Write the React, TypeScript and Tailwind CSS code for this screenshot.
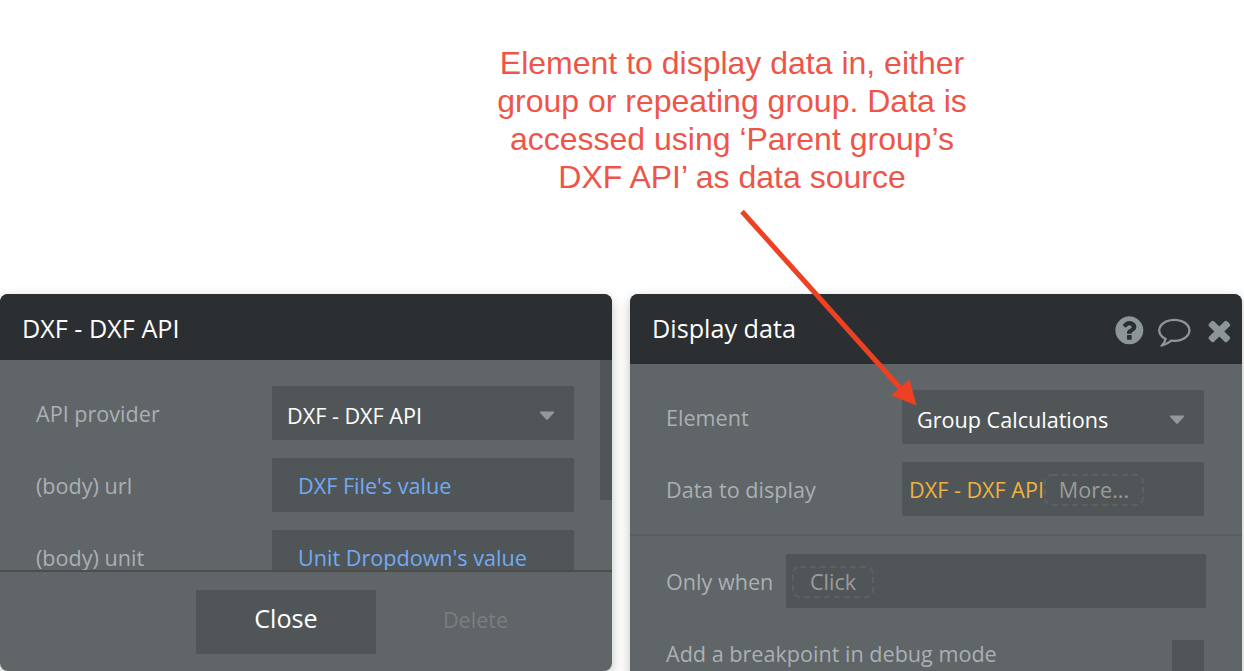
import type { ReactNode } from "react";

const QUESTION =
  "M1024 1376v-192q0-14-9-23t-23-9h-192q-14 0-23 9t-9 23v192q0 14 9 23t23 9h192q14 0 23-9t9-23zm256-672q0-88-55.5-163t-138.5-116-170-41q-243 0-371 213-15 24 8 42l132 100q7 6 19 6 16 0 25-12 53-68 86-92 34-24 86-24 48 0 85.5 26t37.5 59q0 38-20 61t-68 45q-63 28-115.5 86.5t-52.5 125.5v36q0 14 9 23t23 9h192q14 0 23-9t9-23q0-19 21.5-49.5t54.5-49.5q32-18 49-28.5t46-35 44.5-48 28-60.5 12.5-81zm384 192q0 209-103 385.5t-279.5 279.5-385.5 103-385.5-103-279.5-279.5-103-385.5 103-385.5 279.5-279.5 385.5-103 385.5 103 279.5 279.5 103 385.5z";
const COMMENT =
  "M896 384q-204 0-381.5 69.5t-282 187.5-104.5 255q0 112 71.5 213.5t201.5 175.5l87 50-27 96q-24 91-70 172 152-63 275-171l43-38 57 6q69 8 130 8 204 0 381.5-69.5t282-187.5 104.5-255-104.5-255-282-187.5-381.5-69.5zm896 512q0 174-120 321.5t-326 233-450 85.5q-70 0-145-8-198 175-460 242-49 14-114 22h-5q-15 0-27-10.5t-16-27.5v-1q-3-4-.5-12t2-10 4.5-9.5l6-9 7-8.5 8-9q7-8 31-34.5t34.5-38 31-39.5 32.5-51 27-59 26-76q-157-89-247.5-220t-90.5-281q0-174 120-321.5t326-233 450-85.5 450 85.5 326 233 120 321.5z";
const TIMES =
  "M1490 1322q0 40-28 68l-136 136q-28 28-68 28t-68-28l-294-294-294 294q-28 28-68 28t-68-28l-136-136q-28-28-28-68t28-68l294-294-294-294q-28-28-28-68t28-68l136-136q28-28 68-28t68 28l294 294 294-294q28-28 68-28t68 28l136 136q28 28 28 68t-28 68l-294 294 294 294q28 28 28 68z";

function Icon({ d }: { d: string }) {
  return (
    <svg viewBox="0 0 1792 1792" className="size-[32.67px] fill-[#8c9699]">
      <path d={d} />
    </svg>
  );
}

function Caret() {
  return (
    <svg viewBox="0 0 16 10" className="mt-[5px] h-[10px] w-4 fill-[#93989a]">
      <path d="M1.4 0.6h13.2q1 0.2 0.4 1.1L8.8 8.6q-.8.8-1.6 0L1 1.7Q.4.8 1.4.6z" />
    </svg>
  );
}

function Row({ label, children }: { label: string; children: ReactNode }) {
  return (
    <div className="flex h-[54px] shrink-0 items-center">
      <span className="w-[236px] shrink-0 pt-px whitespace-nowrap text-[#abb0b3]">{label}</span>
      {children}
    </div>
  );
}

function Select({ value }: { value: string }) {
  return (
    <div className="flex h-[54px] w-[302px] items-center justify-between rounded-[2px] bg-[#505658] pr-[19px] pl-[15px]">
      <span className="pt-[5px] text-white">{value}</span>
      <Caret />
    </div>
  );
}

function Expression({ value }: { value: string }) {
  return (
    <div className="flex h-[54px] w-[302px] items-center rounded-[2px] bg-[#505658] pl-[26px]">
      <span className="pt-px text-[#73aaf2]">{value}</span>
    </div>
  );
}

function Dashed({ width, children }: { width: string; children: string }) {
  return (
    <span className={`relative flex h-8 items-center justify-center ${width}`}>
      <svg className="absolute inset-0 top-px size-full" fill="none">
        <rect x="1" y="1" rx="7" className="h-[30px] w-[calc(100%-2px)] stroke-[#5c6163]" strokeWidth="2" strokeDasharray="6 4" />
      </svg>
      <span className="pt-px text-[#9a9b9b]">{children}</span>
    </span>
  );
}

export default function App() {
  return (
    <main className="relative flex h-[671px] w-[1244px] flex-col overflow-hidden bg-white font-['Open_Sans',sans-serif] text-[21.6px] leading-[30px]">
      <p className="ml-[482px] h-[294px] w-[500px] shrink-0 pt-[44px] text-center font-['Liberation_Sans',sans-serif] text-[32px] leading-[38px] whitespace-nowrap text-[#ee5548]">
        Element to display data in, either
        <br />
        group or repeating group. Data is
        <br />
        accessed using ‘Parent group’s
        <br />
        DXF API’ as data source
      </p>

      <div className="flex items-start gap-[18px]">
        <section className="flex h-[377px] w-[612px] flex-col overflow-hidden rounded-lg bg-[#606568] shadow-[0_4px_12px_rgba(0,0,0,0.25)]">
          <header className="flex h-[66px] shrink-0 items-center bg-[#2b2f32] pl-[22px] text-[25.2px] text-white">
            <h2 className="pt-0.5">DXF - DXF API</h2>
          </header>
          <div className="flex h-[210px] shrink-0 justify-between overflow-hidden">
            <div className="flex flex-col gap-[18px] pt-[26px] pl-9">
              <Row label="API provider">
                <Select value="DXF - DXF API" />
              </Row>
              <Row label="(body) url">
                <Expression value="DXF File's value" />
              </Row>
              <Row label="(body) unit">
                <Expression value="Unit Dropdown's value" />
              </Row>
            </div>
            <div className="h-[140px] w-3 bg-[#505658]" />
          </div>
          <footer className="flex grow border-t-2 border-[#4c4e4e] pt-[18px] pl-[196px]">
            <button className="h-16 w-[180px] bg-[#505658] pb-2 text-[25.2px] text-white">Close</button>
            <button className="h-16 w-[199px] pb-1 text-[#7c7e7f]">Delete</button>
          </footer>
        </section>

        <section className="flex h-[420px] w-[612px] flex-col overflow-hidden rounded-lg bg-[#606568] shadow-[0_4px_12px_rgba(0,0,0,0.25)]">
          <header className="flex h-[70px] shrink-0 items-center justify-between bg-[#2b2f32] pr-1.5 pl-[22px] text-[25.2px] text-white">
            <h2 className="pb-0.5">Display data</h2>
            <div className="flex gap-[12.3px] pt-[3px]">
              <Icon d={QUESTION} />
              <Icon d={COMMENT} />
              <Icon d={TIMES} />
            </div>
          </header>
          <div className="flex h-[172px] shrink-0 flex-col gap-[18px] border-b-2 border-[#595e60] pt-[26px] pl-9">
            <Row label="Element">
              <Select value="Group Calculations" />
            </Row>
            <Row label="Data to display">
              <div className="flex h-[54px] w-[302px] items-center rounded-[2px] bg-[#505658] pl-[7px] whitespace-nowrap">
                <span className="w-[135px] pt-px text-[#edb23e]">DXF - DXF API</span>
                <Dashed width="w-[100px]">More...</Dashed>
              </div>
            </Row>
          </div>
          <div className="flex flex-col gap-[18px] pt-[18px] pl-9">
            <div className="flex h-[54px] items-center">
              <span className="w-[120px] pt-px whitespace-nowrap text-[#abb0b3]">Only when</span>
              <div className="flex h-[54px] w-[420px] items-center rounded-[2px] bg-[#505658] pl-1.5">
                <Dashed width="w-[82px]">Click</Dashed>
              </div>
            </div>
            <div className="flex h-[54px] items-center">
              <span className="w-[506px] pt-px whitespace-nowrap text-[#abb0b3]">Add a breakpoint in debug mode</span>
              <div className="mt-[6px] size-8 rounded-[2px] bg-[#505658]" />
            </div>
          </div>
        </section>
      </div>

      <svg viewBox="720 190 220 230" className="pointer-events-none absolute top-[190px] left-[720px] h-[230px] w-[220px]">
        <path d="M742 211.5L902 390" className="stroke-[#ee4124]" strokeWidth="5" fill="none" />
        <path d="M909.5 379.5L916.5 405.5L891 395.5z" className="fill-[#ee4124]" />
      </svg>
    </main>
  );
}
